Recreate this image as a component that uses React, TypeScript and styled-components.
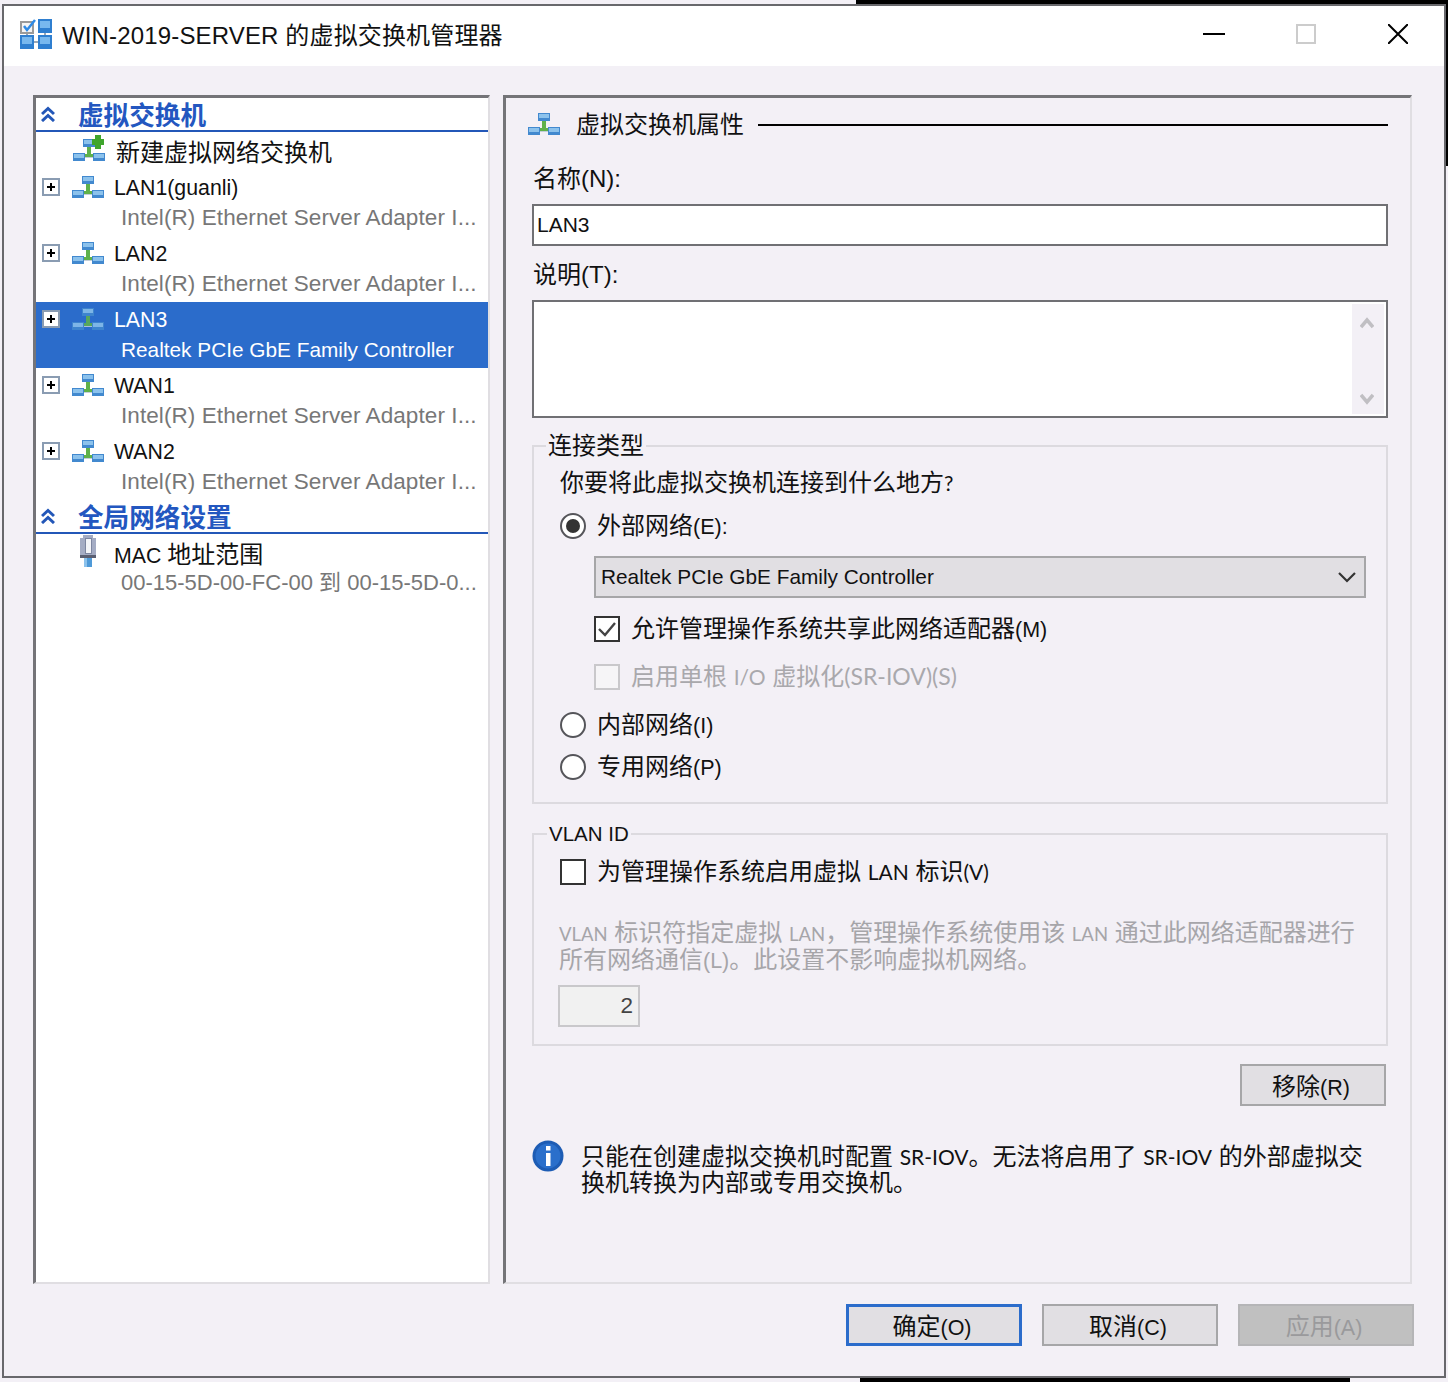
import React from 'react';
import styled, { createGlobalStyle } from 'styled-components';

const Global = createGlobalStyle`
  html, body { margin: 0; padding: 0; background: #f3f0f6; }
  body { width: 1448px; height: 1382px; overflow: hidden; font-family: "Liberation Sans", "Noto Sans CJK SC", sans-serif; color: #111; }
  * { box-sizing: border-box; }
`;

const Desktop = styled.div`
  width: 1448px;
  height: 1382px;
  padding: 4px 2px 4px 2px;
  background:
    linear-gradient(#000, #000) 856px 0 / 592px 4px no-repeat,
    linear-gradient(#000, #000) 1446px 0 / 2px 166px no-repeat,
    linear-gradient(#000, #000) 860px 1378px / 490px 4px no-repeat,
    #f3f0f6;
`;
const Win = styled.div`
  width: 1444px;
  height: 1374px;
  border: 2px solid #68686c;
  background: #f3f0f6;
  display: flex;
  flex-direction: column;
`;
const TitleBar = styled.div`
  height: 60px;
  background: #fff;
  display: flex;
  align-items: center;
  padding: 0 0 4px 16px;
  flex: none;
`;
const TitleText = styled.div`
  margin-left: 10px;
  padding-bottom: 2px;
  font-size: 24px;
  letter-spacing: 0.15px;
  flex: 1;
`;
const WinBtn = styled.div`
  width: 92px;
  height: 56px;
  display: flex;
  align-items: center;
  justify-content: center;
`;
const Main = styled.div`
  display: flex;
  gap: 13px;
  padding: 29px 32px 0 29px;
  height: 1218px;
  flex: none;
`;
const LeftPanel = styled.div`
  width: 457px;
  height: 1189px;
  background: #fff;
  border-style: solid;
  border-width: 3px 2px 2px 3px;
  border-color: #747478 #e0dee2 #e0dee2 #747478;
  flex: none;
`;
const SectionHead = styled.div`
  height: 34px;
  border-bottom: 2px solid #2357b8;
  display: flex;
  align-items: center;
  padding-left: 5px;
`;
const SectionTitle = styled.div`
  margin-left: 23px;
  padding-top: 5px;
  font-size: 25.6px;
  line-height: 29px;
  font-weight: 700;
  color: #2357c0;
`;
const NewRow = styled.div`
  height: 38px;
  display: flex;
  align-items: center;
  padding: 0 0 2px 37px;
  gap: 11px;
  font-size: 24px;
`;
const Item = styled.div<{ $sel?: boolean }>`
  height: 66px;
  padding: 3px 0 0 6px;
  background: ${p => (p.$sel ? '#2b6ccb' : 'transparent')};
  color: ${p => (p.$sel ? '#fff' : '#111')};
`;
const ItemTop = styled.div`
  height: 30px;
  display: flex;
  align-items: center;
`;
const ExpandBox = styled.div`
  width: 18px;
  height: 18px;
  border: 2px solid #8a9cb2;
  background: #fff;
  position: relative;
  margin: -2px 12px 0 0;
  flex: none;
  &::before { content: ''; position: absolute; left: 3px; top: 6px; width: 8px; height: 2px; background: #000; }
  &::after { content: ''; position: absolute; left: 6px; top: 3px; width: 2px; height: 8px; background: #000; }
`;
const IconSlot = styled.div`
  width: 32px;
  height: 24px;
  flex: none;
  display: flex;
  align-items: center;
  justify-content: center;
  margin-top: -2px;
`;
const ItemName = styled.div`
  margin-left: 10px;
  padding-top: 1px;
  font-size: 21.3px;
  white-space: nowrap;
`;
const CjkName = styled.span`
  font-size: 24px;
`;
const ItemSub = styled.div<{ $sel?: boolean; $size?: number; $nudge?: number }>`
  padding-left: 79px;
  height: 30px;
  margin-top: ${p => p.$nudge ?? 0}px;
  line-height: 30px;
  font-size: ${p => p.$size ?? 22.5}px;
  letter-spacing: ${p => (p.$size ? '0' : '0.08px')};
  white-space: nowrap;
  color: ${p => (p.$sel ? '#fff' : '#777')};
`;
const Spacer16 = styled.div`
  width: 30px;
  flex: none;
`;

const RightPanel = styled.div`
  width: 909px;
  height: 1189px;
  border-style: solid;
  border-width: 3px 2px 2px 3px;
  border-color: #747478 #e0dee2 #e0dee2 #747478;
  padding: 0 22px 0 26px;
  flex: none;
`;
const PropHead = styled.div`
  height: 52px;
  margin-left: -4px;
  display: flex;
  align-items: center;
  font-size: 24px;
`;
const PropTitle = styled.div`
  margin: 0 14px 4px 16px;
  white-space: nowrap;
`;
const PropRule = styled.div`
  height: 2px;
  margin-top: 2px;
  flex: 1;
  background: #000;
`;
const FieldLabel = styled.div`
  font-size: 24px;
  height: 54px;
  padding: 14px 0 0 1px;
  line-height: 30px;
`;
const TextInput = styled.div`
  height: 42px;
  background: #fff;
  border: 2px solid #707074;
  font-size: 21px;
  line-height: 37px;
  padding-left: 3px;
`;
const TextArea = styled.div`
  height: 118px;
  background: #fff;
  border: 2px solid #707074;
  padding: 2px;
  display: flex;
  justify-content: flex-end;
`;
const Scroll = styled.div`
  width: 32px;
  background: #f3f0f6;
  display: flex;
  flex-direction: column;
  justify-content: space-between;
  align-items: center;
  padding: 13px 2px 9px 0;
`;
const Group = styled.fieldset<{ $h: number; $mt: number }>`
  margin: ${p => p.$mt}px 0 0;
  height: ${p => p.$h}px;
  border: 2px solid #dcdadf;
  padding: 0;
  min-width: 0;
  position: relative;
`;
const Legend = styled.legend`
  margin: 0 0 0 12px;
  padding: 0 2px;
  font-size: 24px;
  line-height: 28px;
  height: 28px;
`;
const LegendSmall = styled(Legend)`
  margin-left: 13px;
  font-size: 20.5px;
`;
const GroupInner = styled.div`
  margin-top: -14px;
  padding-left: 26px;
`;
const Question = styled.div`
  height: 48px;
  padding-top: 22px;
  font-size: 24px;
  line-height: 30px;
  white-space: nowrap;
`;
const OptRow = styled.div<{ $h: number; $mt?: number }>`
  height: ${p => p.$h}px;
  margin-top: ${p => p.$mt ?? 0}px;
  display: flex;
  align-items: center;
  font-size: 24px;
  white-space: nowrap;
`;
const OptLabel = styled.span<{ $muted?: boolean }>`
  padding-bottom: 5px;
  color: ${p => (p.$muted ? '#a9a8ac' : 'inherit')};
`;
const Radio = styled.div<{ $on?: boolean }>`
  width: 26px;
  height: 26px;
  border-radius: 50%;
  border: 2px solid #55555a;
  background: #fff;
  margin-right: 11px;
  flex: none;
  display: flex;
  align-items: center;
  justify-content: center;
  &::after {
    content: '';
    width: 14px;
    height: 14px;
    border-radius: 50%;
    background: ${p => (p.$on ? '#333' : 'transparent')};
  }
`;
const Check = styled.div<{ $disabled?: boolean }>`
  width: 26px;
  height: 26px;
  border: 2px solid ${p => (p.$disabled ? '#c9c8cb' : '#333')};
  background: ${p => (p.$disabled ? '#f6f5f7' : '#fff')};
  margin-right: 11px;
  flex: none;
  display: flex;
  align-items: center;
  justify-content: center;
`;
const Select = styled.div`
  margin: 8px 0 0 34px;
  width: 772px;
  height: 42px;
  background: #e1dfe3;
  border: 2px solid #a6a6a8;
  font-size: 21px;
  line-height: 38px;
  padding: 0 8px 0 5px;
  display: flex;
  justify-content: space-between;
  align-items: center;
`;
const SelectText = styled.span`
  font-size: 20.8px;
`;
const Indented = styled.div`
  margin-left: 34px;
`;
const VlanText = styled.div`
  margin: 24px 0 0 -1px;
  width: 810px;
  font-size: 24px;
  line-height: 26px;
  color: #a6a5a9;
`;
const Lat = styled.span`
  font-family: Lato, "Liberation Sans", sans-serif;
  font-size: 21px;
`;
const LatWide = styled(Lat)`
  font-size: 23px;
`;
const LatSmall = styled(Lat)`
  font-size: 18.5px;
`;
const Par = styled.span`
  font-size: 21.5px;
`;
const NumBox = styled.div`
  margin: 11px 0 0 -2px;
  width: 82px;
  height: 42px;
  border: 2px solid #c9c8cb;
  background: #f1f1f1;
  font-size: 22.5px;
  line-height: 38px;
  text-align: right;
  padding-right: 5px;
  color: #444;
`;
const RemoveRow = styled.div`
  display: flex;
  justify-content: flex-end;
  margin: 18px 2px 0 0;
`;
const Btn = styled.div<{ $w: number; $variant?: 'focus' | 'disabled' }>`
  width: ${p => p.$w}px;
  height: 42px;
  background: ${p => (p.$variant === 'disabled' ? '#c0c0c0' : '#e1dfe3')};
  border: 2px solid ${p => (p.$variant === 'focus' ? '#2b6ccb' : p.$variant === 'disabled' ? '#b5b5b7' : '#a6a6a8')};
  ${p => (p.$variant === 'focus' ? 'outline: 1px solid #2b6ccb; outline-offset: -3px;' : '')}
  display: flex;
  align-items: center;
  justify-content: center;
  padding: 0 4px 2px 0;
  font-size: 24px;
  color: ${p => (p.$variant === 'disabled' ? '#9a9a9c' : '#111')};
`;
const InfoRow = styled.div`
  display: flex;
  margin-top: 34px;
`;
const InfoText = styled.div`
  margin: 4px 0 0 17px;
  width: 800px;
  font-size: 24px;
  line-height: 26px;
`;
const Footer = styled.div`
  display: flex;
  justify-content: flex-end;
  gap: 20px;
  padding: 20px 30px 0 0;
`;

const NetIcon = ({ plus, faded }: { plus?: boolean; faded?: boolean }) => (
  <svg width="32" height="22" viewBox="0 0 32 22" shapeRendering="crispEdges" opacity={faded ? 0.85 : 1} style={{ overflow: 'visible' }}>
    <rect x="3" y="17" width="26" height="2" fill="#c3ced8" />
    <rect x="14" y="8" width="4" height="9" fill="#5fb14a" />
    <rect x="11" y="15" width="10" height="3" fill="#5fb14a" />
    <rect x="10" y="0" width="12" height="8" fill="#4289cf" />
    <rect x="11" y="1" width="10" height="4" fill="#8cc2ec" />
    <rect x="0" y="14" width="12" height="8" fill="#4289cf" />
    <rect x="1" y="15" width="10" height="4" fill="#8cc2ec" />
    <rect x="20" y="14" width="12" height="8" fill="#4289cf" />
    <rect x="21" y="15" width="10" height="4" fill="#8cc2ec" />
    {plus && (
      <>
        <rect x="22" y="-4" width="6" height="14" fill="#3fa52d" />
        <rect x="19" y="0" width="12" height="6" fill="#3fa52d" />
      </>
    )}
  </svg>
);

const Collapse = () => (
  <svg width="14" height="16" viewBox="0 0 14 16" fill="none" stroke="#2357b8" strokeWidth="3">
    <path d="M1 8 L7 2.5 L13 8" />
    <path d="M1 15 L7 9.5 L13 15" />
  </svg>
);

const MgrIcon = () => (
  <svg width="32" height="30" viewBox="0 0 32 30" shapeRendering="crispEdges">
    <rect x="6" y="12" width="2" height="6" fill="#9aa7b5" />
    <rect x="24" y="12" width="2" height="6" fill="#9aa7b5" />
    <rect x="12" y="22" width="8" height="2" fill="#9aa7b5" />
    <rect x="1" y="3" width="12" height="11" fill="#f4f4f4" stroke="#9a9a9a" strokeWidth="2" />
    <path d="M4 7 L7 11 L15 1" fill="none" stroke="#2e8ae6" strokeWidth="2.5" shapeRendering="auto" />
    <rect x="18" y="0" width="14" height="14" fill="#2f7fd0" />
    <rect x="20" y="2" width="10" height="7" fill="#78b8ee" />
    <rect x="0" y="16" width="14" height="14" fill="#2f7fd0" />
    <rect x="2" y="18" width="10" height="7" fill="#78b8ee" />
    <rect x="18" y="16" width="14" height="14" fill="#2f7fd0" />
    <rect x="20" y="18" width="10" height="7" fill="#78b8ee" />
  </svg>
);

const MacIcon = () => (
  <svg width="16" height="32" viewBox="0 0 16 32" shapeRendering="crispEdges">
    <rect x="0" y="3" width="16" height="19" fill="#a4acc4" />
    <rect x="3" y="0" width="10" height="4" fill="#a4acc4" />
    <rect x="5" y="3" width="6" height="15" fill="#f3f4f8" stroke="#7d86a0" />
    <rect x="0" y="20" width="16" height="3" fill="#5a5f72" />
    <rect x="4" y="23" width="8" height="9" fill="#4f9ad8" />
    <rect x="4" y="23" width="3" height="9" fill="#8cc2ec" />
  </svg>
);

const InfoIcon = () => (
  <svg width="32" height="32" viewBox="0 0 32 32" style={{ flex: 'none' }}>
    <circle cx="16" cy="16" r="15.5" fill="#1d5cb4" />
    <circle cx="16" cy="16" r="12.5" fill="#2a6fcb" />
    <rect x="14" y="13" width="4.5" height="13" fill="#fff" />
    <rect x="14" y="6" width="4.5" height="4.5" fill="#fff" />
  </svg>
);

const Arrow = ({ up }: { up?: boolean }) => (
  <svg width="14" height="12" viewBox="0 0 14 12" fill="none" stroke="#c0bfc3" strokeWidth="3.5">
    <path d={up ? 'M1 10 L7 3 L13 10' : 'M1 2 L7 9 L13 2'} />
  </svg>
);

const adapters = [
  { name: 'LAN1(guanli)', sub: 'Intel(R) Ethernet Server Adapter I...' },
  { name: 'LAN2', sub: 'Intel(R) Ethernet Server Adapter I...' },
  { name: 'LAN3', sub: 'Realtek PCIe GbE Family Controller', sel: true, size: 20.8 },
  { name: 'WAN1', sub: 'Intel(R) Ethernet Server Adapter I...' },
  { name: 'WAN2', sub: 'Intel(R) Ethernet Server Adapter I...' },
];

export default function App() {
  return (
    <Desktop>
      <Global />
      <Win>
        <TitleBar>
          <MgrIcon />
          <TitleText>WIN-2019-SERVER 的虚拟交换机管理器</TitleText>
          <WinBtn>
            <svg width="22" height="2"><rect width="22" height="2" fill="#000" /></svg>
          </WinBtn>
          <WinBtn>
            <svg width="20" height="20"><rect x="1" y="1" width="18" height="18" fill="none" stroke="#ccc" strokeWidth="2" /></svg>
          </WinBtn>
          <WinBtn>
            <svg width="20" height="20"><path d="M0 0 L20 20 M20 0 L0 20" stroke="#000" strokeWidth="2" /></svg>
          </WinBtn>
        </TitleBar>
        <Main>
          <LeftPanel>
            <SectionHead>
              <Collapse />
              <SectionTitle>虚拟交换机</SectionTitle>
            </SectionHead>
            <NewRow>
              <NetIcon plus />
              <span>新建虚拟网络交换机</span>
            </NewRow>
            {adapters.map(a => (
              <Item key={a.name} $sel={a.sel}>
                <ItemTop>
                  <ExpandBox />
                  <IconSlot><NetIcon faded={a.sel} /></IconSlot>
                  <ItemName>{a.name}</ItemName>
                </ItemTop>
                <ItemSub $sel={a.sel} $size={a.size}>{a.sub}</ItemSub>
              </Item>
            ))}
            <SectionHead>
              <Collapse />
              <SectionTitle>全局网络设置</SectionTitle>
            </SectionHead>
            <Item>
              <ItemTop>
                <Spacer16 />
                <IconSlot><MacIcon /></IconSlot>
                <ItemName>MAC <CjkName>地址范围</CjkName></ItemName>
              </ItemTop>
              <ItemSub $size={22} $nudge={1}>00-15-5D-00-FC-00 到 00-15-5D-0...</ItemSub>
            </Item>
          </LeftPanel>
          <RightPanel>
            <PropHead>
              <NetIcon />
              <PropTitle>虚拟交换机属性</PropTitle>
              <PropRule />
            </PropHead>
            <FieldLabel>名称(N):</FieldLabel>
            <TextInput>LAN3</TextInput>
            <FieldLabel>说明(T):</FieldLabel>
            <TextArea>
              <Scroll>
                <Arrow up />
                <Arrow />
              </Scroll>
            </TextArea>
            <Group $h={372} $mt={14}>
              <Legend>连接类型</Legend>
              <GroupInner>
                <Question>你要将此虚拟交换机连接到什么地方<Lat>?</Lat></Question>
                <OptRow $h={44} $mt={10}><Radio $on /><OptLabel>外部网络<Par>(E):</Par></OptLabel></OptRow>
                <Select>
                  <SelectText>Realtek PCIe GbE Family Controller</SelectText>
                  <svg width="18" height="12" viewBox="0 0 18 12" fill="none" stroke="#333" strokeWidth="2.2">
                    <path d="M1 2 L9 10 L17 2" />
                  </svg>
                </Select>
                <Indented>
                  <OptRow $h={48} $mt={7}>
                    <Check>
                      <svg width="20" height="18" viewBox="0 0 20 18" fill="none" stroke="#444" strokeWidth="2.4">
                        <path d="M2 9 L8 15 L18 3" />
                      </svg>
                    </Check>
                    <OptLabel>允许管理操作系统共享此网络适配器<Par>(M)</Par></OptLabel>
                  </OptRow>
                  <OptRow $h={48}>
                    <Check $disabled />
                    <OptLabel $muted>启用单根 <Lat>I/O</Lat> 虚拟化<LatWide>(SR-IOV)(S)</LatWide></OptLabel>
                  </OptRow>
                </Indented>
                <OptRow $h={42} $mt={3}><Radio /><OptLabel>内部网络<Par>(I)</Par></OptLabel></OptRow>
                <OptRow $h={42}><Radio /><OptLabel>专用网络<Par>(P)</Par></OptLabel></OptRow>
              </GroupInner>
            </Group>
            <Group $h={226} $mt={16}>
              <LegendSmall>VLAN ID</LegendSmall>
              <GroupInner>
                <OptRow $h={48} $mt={14}>
                  <Check />
                  <OptLabel>为管理操作系统启用虚拟 <Lat>LAN</Lat> 标识<Lat>(V)</Lat></OptLabel>
                </OptRow>
                <VlanText><LatSmall>VLAN</LatSmall> 标识符指定虚拟 <LatSmall>LAN</LatSmall>，管理操作系统使用该 <LatSmall>LAN</LatSmall> 通过此网络适配器进行所有网络通信<Par>(L)</Par>。此设置不影响虚拟机网络。</VlanText>
                <NumBox>2</NumBox>
              </GroupInner>
            </Group>
            <RemoveRow>
              <Btn $w={146}><span>移除<Par>(R)</Par></span></Btn>
            </RemoveRow>
            <InfoRow>
              <InfoIcon />
              <InfoText>只能在创建虚拟交换机时配置 <Lat>SR-IOV</Lat>。无法将启用了 <Lat>SR-IOV</Lat> 的外部虚拟交换机转换为内部或专用交换机。</InfoText>
            </InfoRow>
          </RightPanel>
        </Main>
        <Footer>
          <Btn $w={176} $variant="focus"><span>确定<Par>(O)</Par></span></Btn>
          <Btn $w={176}><span>取消<Par>(C)</Par></span></Btn>
          <Btn $w={176} $variant="disabled"><span>应用<Par>(A)</Par></span></Btn>
        </Footer>
      </Win>
    </Desktop>
  );
}
